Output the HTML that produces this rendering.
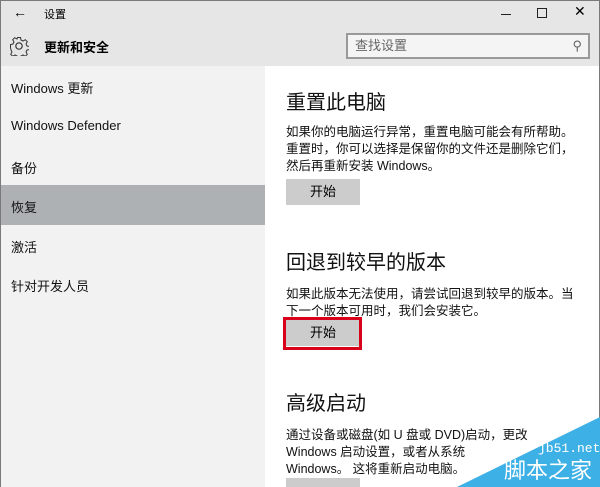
<!DOCTYPE html>
<html><head><meta charset="utf-8"><style>
*{margin:0;padding:0;box-sizing:border-box}
html,body{width:600px;height:487px;overflow:hidden}
body{background:#fff;font-family:"Liberation Sans","Noto Sans CJK SC",sans-serif;color:#000;position:relative}
.top{position:absolute;left:0;top:0;width:600px;height:66px;background:#e6e6e6}
.side{position:absolute;left:0;top:66px;width:265px;height:421px;background:#f2f2f2}
.t{position:absolute;white-space:nowrap}
.item{position:absolute;left:11px;font-size:13px;color:#111}
.sel{position:absolute;left:1px;top:185px;width:264px;height:40px;background:#adb1b3}
h2{position:absolute;left:286px;font-size:20px;font-weight:normal;color:#111}
.p{position:absolute;left:286px;font-size:12.5px;line-height:17px;color:#111;white-space:nowrap}
.btn{position:absolute;left:286px;width:74px;height:26px;background:#ccc;font-size:13px;text-align:center;line-height:26px}
.search{position:absolute;left:346px;top:33px;width:244px;height:26px;border:2px solid #999;background:#f4f4f4;font-size:13px;color:#666;padding-left:7px;line-height:22px}
.wm{position:absolute;left:457px;top:417px;width:0;height:0;border-left:143px solid transparent;border-bottom:70px solid #3db0e6}
.frame{position:absolute;left:0;top:0;width:600px;height:487px;border:1px solid #7a7a7a;border-bottom:none}
</style></head><body>
<div class="top"></div>
<div class="side"></div>
<div class="sel"></div>
<div class="t" style="left:13px;top:4px;font-size:14px">←</div>
<div class="t" style="left:44px;top:6px;font-size:11px">设置</div>
<div class="t" style="left:501px;top:14px;width:10px;height:1.3px;background:#222"></div>
<div class="t" style="left:537px;top:8px;width:10px;height:10px;border:1.3px solid #222"></div>
<div class="t" style="left:574px;top:3px;font-size:14px">✕</div>
<svg class="t" style="left:9px;top:36px" width="20" height="20" viewBox="0 0 20 20"><circle cx="10" cy="10" r="3.2" fill="none" stroke="#333" stroke-width="1.2"/><path d="M8.5 1.5h3l.5 2.5 2 1 2.3-1.3 2 2-1.3 2.3 1 2 2.5.5v3l-2.5.5-1 2 1.3 2.3-2 2-2.3-1.3-2 1-.5 2.5h-3l-.5-2.5-2-1-2.3 1.3-2-2 1.3-2.3-1-2L1.5 11.5v-3l2.5-.5 1-2L3.7 3.7l2-2L8 3l.5-1.5z" fill="none" stroke="#333" stroke-width="1"/></svg>
<div class="t" style="left:44px;top:37px;font-size:13px;font-weight:bold">更新和安全</div>
<div class="search">查找设置<span style="position:absolute;right:6px;top:0;color:#666">⚲</span></div>
<div class="item" style="top:78px">Windows 更新</div>
<div class="item" style="top:118px">Windows Defender</div>
<div class="item" style="top:158px">备份</div>
<div class="item" style="top:197px">恢复</div>
<div class="item" style="top:237px">激活</div>
<div class="item" style="top:276px">针对开发人员</div>
<h2 style="top:86px">重置此电脑</h2>
<div class="p" style="top:124px">如果你的电脑运行异常，重置电脑可能会有所帮助。<br>重置时，你可以选择是保留你的文件还是删除它们，<br>然后再重新安装 Windows。</div>
<div class="btn" style="top:179px">开始</div>
<h2 style="top:246px">回退到较早的版本</h2>
<div class="p" style="top:286px">如果此版本无法使用，请尝试回退到较早的版本。当<br>下一个版本可用时，我们会安装它。</div>
<div class="btn" style="top:320px">开始</div>
<div class="t" style="left:283px;top:317px;width:79px;height:33px;border:3px solid #d9001b"></div>
<h2 style="top:387px">高级启动</h2>
<div class="p" style="top:427px">通过设备或磁盘(如 U 盘或 DVD)启动，更改<br>Windows 启动设置，或者从系统<br>Windows。 这将重新启动电脑。</div>
<div class="btn" style="top:478px;height:9px"></div>
<div class="frame"></div>
<div class="wm"></div>
<div class="t" style="left:538px;top:441px;font-size:13px;color:#fff;font-family:'Liberation Mono',monospace">jb51.net</div>
<div class="t" style="left:504px;top:457px;font-size:22px;color:#fff;line-height:28px">脚本之家</div>
</body></html>
